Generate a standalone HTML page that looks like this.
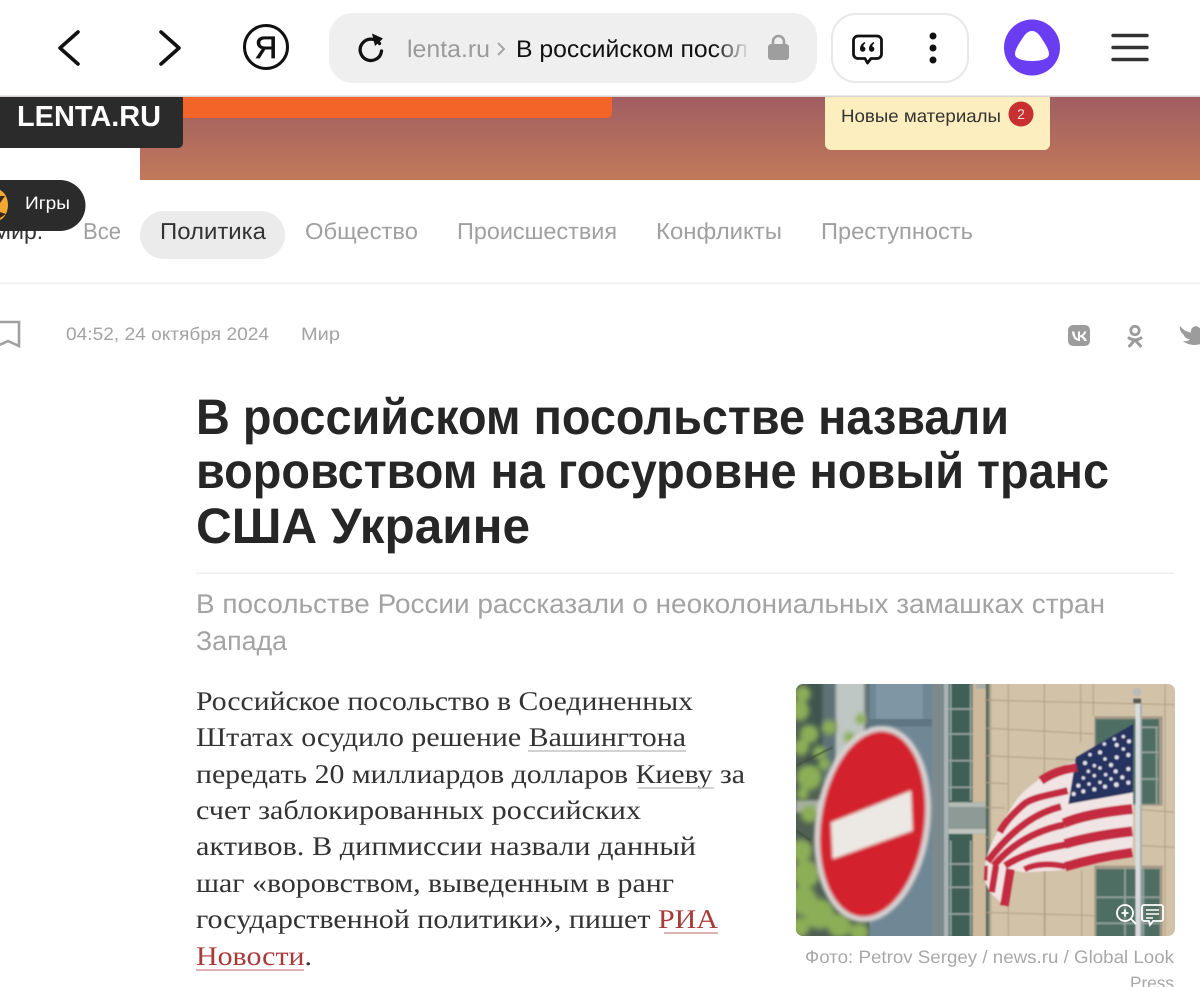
<!DOCTYPE html>
<html lang="ru"><head><meta charset="utf-8"><title>В российском посольстве назвали воровством на госуровне новый транс США Украине</title>
<style>
html,body{margin:0;padding:0;background:#fff;width:1200px;height:987px;overflow:hidden}
svg{display:block}
text{font-family:"Liberation Sans","Noto Sans CJK SC",sans-serif;text-rendering:geometricPrecision}
.s{font-family:"Liberation Serif","Noto Serif CJK SC",serif;font-size:27px;fill:#333}
.t{font-size:23px;fill:#a0a0a0}
.h{font-size:50px;font-weight:bold;fill:#262626}
.u{font-size:27px;fill:#a3a3a3}
</style></head><body>
<svg width="1200" height="987" viewBox="0 0 1200 987" xmlns="http://www.w3.org/2000/svg">
<defs>
<linearGradient id="bn" x1="0" y1="0" x2="0" y2="1"><stop offset="0" stop-color="#a05d62"/><stop offset="1" stop-color="#c17a59"/></linearGradient>
<linearGradient id="fade" gradientUnits="userSpaceOnUse" x1="715" y1="0" x2="750" y2="0"><stop offset="0" stop-color="#111"/><stop offset="1" stop-color="#111" stop-opacity="0"/></linearGradient>
<filter id="b1" x="-5%" y="-5%" width="110%" height="110%"><feGaussianBlur stdDeviation="5"/></filter>
<filter id="b2" x="-5%" y="-5%" width="110%" height="110%"><feGaussianBlur stdDeviation="8"/></filter>
<filter id="b3" x="-5%" y="-5%" width="110%" height="110%"><feGaussianBlur stdDeviation="2.500"/></filter>
<clipPath id="ph"><rect x="796" y="684" width="379" height="252" rx="7"/></clipPath>
</defs>
<rect width="1200" height="987" fill="#fff"/>

<!-- banner -->
<rect x="140" y="96" width="1060" height="84" fill="url(#bn)"/>
<path d="M183 96H612V113a5 5 0 0 1-5 5H183Z" fill="#f26428"/>
<path d="M825 96H1050V144a6 6 0 0 1-6 6H831a6 6 0 0 1-6-6Z" fill="#fdeebf"/>
<text x="841" y="122" font-size="18" fill="#333" textLength="160" lengthAdjust="spacingAndGlyphs">Новые материалы</text>
<circle cx="1021" cy="114" r="12.500" fill="#c8302f"/>
<text x="1021" y="119" font-size="14" fill="#f6dcdc" text-anchor="middle">2</text>
<path d="M0 96H183V143a5 5 0 0 1-5 5H0Z" fill="#2b2b2b"/>
<text x="17" y="126" font-size="29" font-weight="bold" fill="#fff" textLength="144" lengthAdjust="spacingAndGlyphs">LENTA.RU</text>

<!-- browser bar -->
<rect width="1200" height="96" fill="#fff"/>
<rect y="95.500" width="1200" height="1.500" fill="#d9d3d3"/>
<path d="M78 32 60 48 78 64" fill="none" stroke="#111" stroke-width="3.600" stroke-linecap="round" stroke-linejoin="round"/>
<path d="M161 32 179 48 161 64" fill="none" stroke="#111" stroke-width="3.600" stroke-linecap="round" stroke-linejoin="round"/>
<circle cx="266" cy="47" r="21.500" fill="none" stroke="#111" stroke-width="3"/>
<text x="266" y="58" font-size="31" fill="#111" stroke="#111" stroke-width=".7" text-anchor="middle">Я</text>
<rect x="329" y="13" width="488" height="70" rx="24" fill="#efefef"/>
<path d="M379.500 43.500A10.700 10.700 0 1 0 381.500 51" fill="none" stroke="#111" stroke-width="3.300" stroke-linecap="round"/>
<path d="M372 33.500 383 38.500 375 46Z" fill="#111"/>
<text x="407" y="57" font-size="24" fill="#9a9a9a" textLength="83" lengthAdjust="spacingAndGlyphs">lenta.ru</text>
<path d="M498 43 504 49 498 55" fill="none" stroke="#a5a5a5" stroke-width="2"/>
<text x="516" y="57" font-size="24" fill="url(#fade)" textLength="232" lengthAdjust="spacingAndGlyphs">В российском посол</text>
<rect x="768" y="44" width="21" height="16" rx="3" fill="#9e9e9e"/>
<path d="M773 45V41.500a5.500 5.500 0 0 1 11 0V45" fill="none" stroke="#9e9e9e" stroke-width="2.600"/>
<rect x="832" y="14" width="136" height="68" rx="24" fill="#fff" stroke="#e8e8e8" stroke-width="2"/>
<path d="M858 36H877a4.500 4.500 0 0 1 4.500 4.500V54a4.500 4.500 0 0 1-4.500 4.500H871L867.500 63 865 58.500H858a4.500 4.500 0 0 1-4.500-4.500V40.500A4.500 4.500 0 0 1 858 36Z" fill="none" stroke="#111" stroke-width="2.800" stroke-linejoin="round"/>
<path d="M864.500 42C861 44 860 46.500 860 49a2.700 2.700 0 1 0 3.200-2.600C863.400 45 864 44 865.500 43.200ZM873.500 42C870 44 869 46.500 869 49a2.700 2.700 0 1 0 3.200-2.600C872.400 45 873 44 874.500 43.200Z" fill="#111"/>
<circle cx="933" cy="36" r="3.500" fill="#111"/><circle cx="933" cy="48" r="3.500" fill="#111"/><circle cx="933" cy="60" r="3.500" fill="#111"/>
<circle cx="1032" cy="47.500" r="28" fill="#6a3df2"/>
<path d="M1032 31C1028 31 1025 34 1022 39 1018 45 1015 50 1015 54 1015 59 1023 61 1032 61S1049 59 1049 54C1049 50 1046 45 1042 39 1039 34 1036 31 1032 31Z" fill="#fff"/>
<path d="M1113 35.500H1147M1113 47.500H1147M1113 59.500H1147" stroke="#333" stroke-width="3.400" stroke-linecap="round"/>

<!-- tabs -->
<text x="-8" y="239" font-size="23" fill="#333">Мир.</text>
<rect x="140" y="211" width="145" height="48" rx="24" fill="#ebebeb"/>
<text class="t" x="83" y="239" textLength="38" lengthAdjust="spacingAndGlyphs">Все</text>
<text class="t" x="160" y="239" style="fill:#333" textLength="106" lengthAdjust="spacingAndGlyphs">Политика</text>
<text class="t" x="305" y="239" textLength="113" lengthAdjust="spacingAndGlyphs">Общество</text>
<text class="t" x="457" y="239" textLength="160" lengthAdjust="spacingAndGlyphs">Происшествия</text>
<text class="t" x="656" y="239" textLength="126" lengthAdjust="spacingAndGlyphs">Конфликты</text>
<text class="t" x="821" y="239" textLength="152" lengthAdjust="spacingAndGlyphs">Преступность</text>
<path d="M0 180H60a25.500 25.500 0 0 1 0 51H0Z" fill="#2b2b2b"/>
<ellipse cx="-4" cy="205" rx="12" ry="16" fill="#f2a833"/>
<path d="M0 196H5L0 203ZM0 212 6 214 0 218Z" fill="#3a2a1a"/>
<text x="25" y="209" font-size="18" fill="#fff" textLength="45" lengthAdjust="spacingAndGlyphs">Игры</text>
<rect y="282.500" width="1200" height="1.500" fill="#efefef"/>

<!-- meta -->
<path d="M-3 322H19V346L8 341-3 346Z" fill="none" stroke="#a0a0a0" stroke-width="2.600"/>
<text x="66" y="340" font-size="18" fill="#a3a3a3" textLength="203" lengthAdjust="spacingAndGlyphs">04:52, 24 октября 2024</text>
<text x="301" y="340" font-size="18" fill="#a3a3a3" textLength="39" lengthAdjust="spacingAndGlyphs">Мир</text>
<rect x="1068" y="325" width="22" height="21" rx="5" fill="#9c9c9c"/>
<path d="M1072 331.500C1072.500 338 1075.500 341 1080 341V337C1082 337.500 1083.500 339 1084.500 341H1087C1086 338.500 1084.500 336.800 1083 336 1084.500 335 1085.800 333.500 1086.500 331.500H1084.300C1083.500 333.500 1082 335 1080 335.500V331.500H1078V338.800C1076 338 1074.700 335.500 1074.400 331.500Z" fill="#fff"/>
<circle cx="1135" cy="330.500" r="4.200" fill="none" stroke="#9c9c9c" stroke-width="2.800"/>
<path d="M1129 338C1133 340.500 1137 340.500 1141 338M1135 340 1129.500 346M1135 340 1140.500 346" fill="none" stroke="#9c9c9c" stroke-width="3" stroke-linecap="round"/>
<path d="M1180 326C1183 330 1187 332 1191 332.500 1190 327.500 1196 324 1199.500 328L1204 327V342C1198 347 1187 345 1183 341 1186 341.500 1188 341 1190 339.500 1186 338.500 1184 336.500 1183.500 334.500 1181.500 333 1179 330 1180 326Z" fill="#9c9c9c"/>

<!-- headline -->
<text class="h" x="196" y="434" textLength="813" lengthAdjust="spacingAndGlyphs">В российском посольстве назвали</text>
<text class="h" x="196" y="488" textLength="913" lengthAdjust="spacingAndGlyphs">воровством на госуровне новый транс</text>
<text class="h" x="196" y="543" textLength="334" lengthAdjust="spacingAndGlyphs">США Украине</text>
<rect x="196" y="572.500" width="978" height="1.500" fill="#efefef"/>
<text class="u" x="196" y="613" textLength="909" lengthAdjust="spacingAndGlyphs">В посольстве России рассказали о неоколониальных замашках стран</text>
<text class="u" x="196" y="650" textLength="91" lengthAdjust="spacingAndGlyphs">Запада</text>

<!-- body -->
<text class="s" x="196" y="710" textLength="497" lengthAdjust="spacingAndGlyphs">Российское посольство в Соединенных</text>
<text class="s" x="196" y="746" textLength="490" lengthAdjust="spacingAndGlyphs">Штатах осудило решение Вашингтона</text>
<text class="s" x="196" y="783" textLength="549" lengthAdjust="spacingAndGlyphs">передать 20 миллиардов долларов Киеву за</text>
<text class="s" x="196" y="819" textLength="445" lengthAdjust="spacingAndGlyphs">счет заблокированных российских</text>
<text class="s" x="196" y="855" textLength="500" lengthAdjust="spacingAndGlyphs">активов. В дипмиссии назвали данный</text>
<text class="s" x="196" y="892" textLength="478" lengthAdjust="spacingAndGlyphs">шаг «воровством, выведенным в ранг</text>
<text class="s" x="196" y="928" textLength="522" lengthAdjust="spacingAndGlyphs">государственной политики», пишет <tspan fill="#a83a3a">РИА</tspan></text>
<text class="s" x="196" y="965" textLength="116" lengthAdjust="spacingAndGlyphs"><tspan fill="#a83a3a">Новости</tspan>.</text>
<path d="M528 751H686M638 788H714" stroke="#c4c4c4" stroke-width="1.500"/>
<path d="M664 933H718M196 970H304" stroke="#cf9a9a" stroke-width="1.500"/>

<!-- photo -->
<g clip-path="url(#ph)">
<rect x="796" y="684" width="379" height="252" fill="#d2c2a8"/>
<g transform="translate(796 684) scale(.33333)">
 <g filter="url(#b1)">
 <rect x="-20" y="-20" width="600" height="800" fill="#4f5f52"/>
 <rect x="30" y="-20" width="50" height="320" fill="#3f5450"/>
 <rect x="80" y="-20" width="40" height="320" fill="#5f7277"/>
 <rect x="120" y="-20" width="85" height="260" fill="#bfc7c5"/>
 <rect x="205" y="-20" width="15" height="260" fill="#68767a"/>
 <path d="M0 350H80V385H0Z" fill="#a9b0a8"/>
 </g>
 <g filter="url(#b2)" fill="#8cae57">
 <circle cx="20" cy="30" r="24"/><circle cx="10" cy="80" r="30"/><circle cx="40" cy="150" r="28"/><circle cx="100" cy="130" r="22"/>
 <circle cx="160" cy="160" r="16"/><circle cx="195" cy="105" r="16"/><circle cx="15" cy="190" r="24"/><circle cx="70" cy="205" r="20"/>
 <circle cx="40" cy="280" r="38"/><circle cx="85" cy="240" r="18"/><circle cx="20" cy="330" r="18"/><circle cx="40" cy="390" r="26"/>
 <circle cx="15" cy="500" r="34"/><circle cx="30" cy="570" r="42"/><circle cx="20" cy="650" r="44"/><circle cx="70" cy="690" r="46"/>
 <circle cx="130" cy="725" r="36"/><circle cx="190" cy="745" r="28"/><circle cx="10" cy="730" r="30"/>
 </g>
 <path d="M0 245 110 190M0 440 45 470" stroke="#3c4a34" stroke-width="4" fill="none" filter="url(#b3)"/>
 <g filter="url(#b3)">
 <rect x="220" y="-10" width="190" height="780" fill="#6f8795"/>
 <rect x="240" y="-10" width="140" height="115" fill="#7f96a5"/>
 <rect x="220" y="105" width="190" height="22" fill="#5e7482"/>
 <rect x="408" y="-10" width="50" height="780" fill="#7b8a8e"/>
 <rect x="444" y="-10" width="14" height="780" fill="#a9b3b5"/>
 <rect x="458" y="-10" width="72" height="780" fill="#3f5e57"/>
 <path d="M458 75H530M458 150H530M458 230H530M458 310H530M458 540H530M458 610H530M458 690H530M464 0V350M524 0V350M464 470V756M524 470V756" stroke="#95a59f" stroke-width="5" fill="none"/>
 <rect x="458" y="355" width="112" height="95" fill="#8e9a96"/>
 <rect x="458" y="355" width="112" height="14" fill="#b3bab4"/>
 <rect x="458" y="435" width="112" height="14" fill="#c0c6be"/>
 <rect x="530" y="-10" width="40" height="365" fill="#cdb99c"/>
 <rect x="530" y="450" width="40" height="320" fill="#cdb99c"/>
 <rect x="540" y="-10" width="30" height="24" fill="#a9ada5"/>
 </g>
 <g filter="url(#b1)">
 <g transform="rotate(8 230 420)">
  <ellipse cx="230" cy="420" rx="172" ry="296" fill="#d8d3d3"/>
  <ellipse cx="230" cy="420" rx="155" ry="280" fill="#d3222e"/>
 </g>
 <path d="M105 415 345 320 350 440 110 525Z" fill="#ece9e4"/>
 </g>
</g>
<g transform="translate(985 684) scale(.33333)">
 <g filter="url(#b3)" fill="none" stroke="#ae9f85" stroke-width="3">
 <path d="M0 48 570 62M0 132 330 150M0 215 280 228M0 295 70 300M450 375 570 385M470 485 570 490M0 370 60 372M0 460H15M0 685 330 695M70 0V756M178 0V756M287 0V175M540 0V756M325 0V95M290 560V756M180 560V756"/>
 </g>
 <g filter="url(#b3)">
 <rect x="328" y="97" width="205" height="268" fill="#a39a88"/>
 <rect x="332" y="105" width="190" height="255" fill="#4f6e64"/>
 <path d="M465 130H520M465 205H520M465 285H520M515 130V360" stroke="#95a59f" stroke-width="5"/>
 <rect x="328" y="545" width="205" height="221" fill="#a39a88"/>
 <rect x="334" y="555" width="190" height="211" fill="#4f6e64"/>
 <path d="M334 640H524M334 718H524M420 555V756M475 555V756" stroke="#95a59f" stroke-width="5"/>
 </g>
 <g filter="url(#b3)">
 <rect x="451" y="60" width="20" height="710" fill="#d9dcdc"/>
 <rect x="465" y="60" width="6" height="710" fill="#a8aeb0"/>
 <circle cx="456" cy="24" r="13" fill="#b9bcb8"/>
 <rect x="445" y="44" width="23" height="14" fill="#5a5a52"/>
 <path d="M275 232C215 250 150 285 100 340 50 410 15 480 0 535L0 595 15 625 60 668 85 560 120 565 240 558 443 517 445 325 250 360Z" fill="#f0e4e4"/>
 <path d="M273 220 445 120 443 325 250 360Z" fill="#25305f"/>
 <g fill="none" stroke="#c42a40">
  <path d="M275 250C230 258 200 268 168 290" stroke-width="26"/>
  <path d="M248 320C200 332 150 338 120 358 85 388 62 412 44 445" stroke-width="21"/>
  <path d="M228 368C160 385 90 425 8 532" stroke-width="21"/>
  <path d="M442 375C370 382 290 395 236 418" stroke-width="30"/>
  <path d="M238 422C160 438 85 475 26 545" stroke-width="21"/>
  <path d="M442 442C370 450 300 462 240 480" stroke-width="30"/>
  <path d="M242 482C170 495 110 512 60 545" stroke-width="21"/>
  <path d="M442 505C370 515 300 530 240 548" stroke-width="28"/>
  <path d="M242 548C200 538 150 538 118 556" stroke-width="18"/>
  <path d="M33 545 20 625" stroke-width="20"/>
  <path d="M76 555 58 665" stroke-width="26"/>
  <path d="M4 545 2 590" stroke-width="10"/>
 </g>
 <g fill="#e4e6ef">
  <circle cx="300" cy="237" r="6"/><circle cx="345" cy="205" r="6"/><circle cx="395" cy="183" r="6"/><circle cx="432" cy="172" r="6"/>
  <circle cx="315" cy="212" r="5"/><circle cx="358" cy="180" r="5"/><circle cx="415" cy="158" r="5"/>
  <circle cx="328" cy="245" r="5"/><circle cx="378" cy="243" r="6"/><circle cx="430" cy="213" r="6"/><circle cx="395" cy="220" r="6"/>
  <circle cx="310" cy="262" r="5"/><circle cx="345" cy="252" r="5"/><circle cx="392" cy="262" r="6"/><circle cx="430" cy="255" r="6"/>
  <circle cx="280" cy="305" r="6"/><circle cx="295" cy="282" r="5"/><circle cx="328" cy="275" r="5"/><circle cx="362" cy="272" r="5"/><circle cx="412" cy="280" r="6"/>
  <circle cx="266" cy="330" r="6"/><circle cx="295" cy="322" r="6"/><circle cx="328" cy="316" r="6"/><circle cx="360" cy="308" r="6"/><circle cx="394" cy="302" r="7"/><circle cx="430" cy="296" r="6"/><circle cx="312" cy="300" r="5"/><circle cx="345" cy="295" r="5"/><circle cx="378" cy="285" r="5"/>
  <circle cx="360" cy="225" r="5"/><circle cx="415" cy="195" r="5"/><circle cx="388" cy="165" r="5"/>
 </g>
 </g>
</g>
<circle cx="1125" cy="913" r="8" fill="none" stroke="#fff" stroke-width="1.800"/>
<path d="M1121.500 913H1128.500M1125 909.500V916.500M1131 919 1136 924" stroke="#fff" stroke-width="1.800" fill="none"/>
<path d="M1144 905H1161a2 2 0 0 1 2 2V919a2 2 0 0 1-2 2H1153L1150 925 1149 921H1144a2 2 0 0 1-2-2V907a2 2 0 0 1 2-2Z" fill="rgba(90,110,100,.4)" stroke="#fff" stroke-width="1.800"/>
<path d="M1146 910H1159M1146 914H1159M1146 918H1153" stroke="#fff" stroke-width="1.500"/>
</g>
<text x="805" y="963" font-size="18" fill="#a8a8a8" textLength="369" lengthAdjust="spacingAndGlyphs">Фото: Petrov Sergey / news.ru / Global Look</text>
<text x="1130" y="989" font-size="18" fill="#a8a8a8" textLength="44" lengthAdjust="spacingAndGlyphs">Press</text>
</svg>
</body></html>
